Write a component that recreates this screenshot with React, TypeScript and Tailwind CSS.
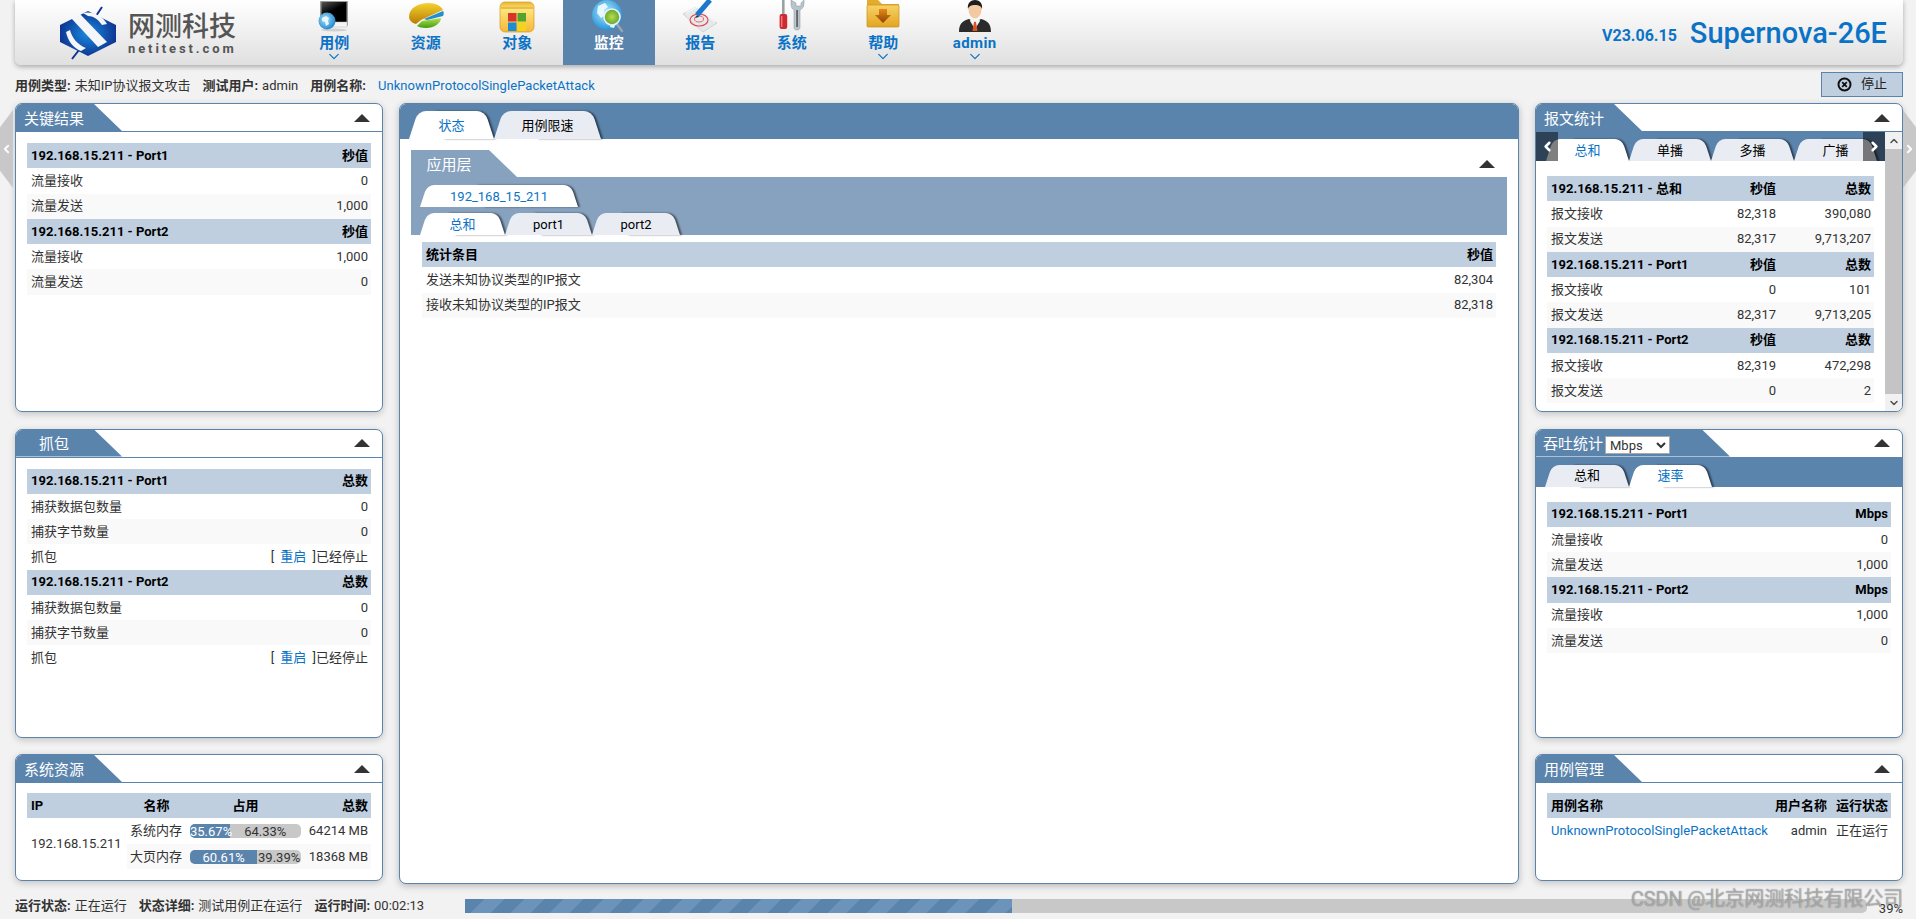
import type { ReactNode } from "react";
import { ChevronDown, ChevronLeft, ChevronRight, ChevronUp } from "lucide-react";

const navItems = [
  { label: "用例", icon: <CaseIcon />, menu: true },
  { label: "资源", icon: <ResourceIcon /> },
  { label: "对象", icon: <ObjectIcon /> },
  { label: "监控", icon: <MonitorIcon />, active: true },
  { label: "报告", icon: <ReportIcon /> },
  { label: "系统", icon: <SystemIcon /> },
  { label: "帮助", icon: <HelpIcon />, menu: true },
  { label: "admin", icon: <AdminIcon />, menu: true },
];

function CaseIcon() {
  return (
    <svg width="40" height="34" viewBox="0 0 40 34">
      <defs>
        <linearGradient id="screen" x1="0" y1="0" x2="0.6" y2="1">
          <stop offset="0" stopColor="#555" />
          <stop offset="0.5" stopColor="#000" />
        </linearGradient>
        <radialGradient id="globe1" cx="0.4" cy="0.4" r="0.7">
          <stop offset="0" stopColor="#a5e2fb" />
          <stop offset="1" stopColor="#0f7cc9" />
        </radialGradient>
      </defs>
      <rect x="6" y="1" width="28" height="25" rx="1" fill="#9a9a9a" />
      <rect x="7.5" y="2" width="25" height="21" fill="url(#screen)" />
      <rect x="18" y="22" width="15" height="5" fill="#f4f4f4" stroke="#bbb" strokeWidth="0.5" />
      <ellipse cx="20" cy="30" rx="13" ry="1.5" fill="#bbb" opacity="0.6" />
      <circle cx="13" cy="21" r="8.5" fill="url(#globe1)" />
      <path d="M8 18l4-2 3 2-1 3 1 3-3 2-1-4-3-1z" fill="#e8f6fd" />
    </svg>
  );
}

function ResourceIcon() {
  return (
    <svg width="40" height="34" viewBox="0 0 40 34">
      <defs>
        <linearGradient id="pieY" x1="0" y1="0" x2="0" y2="1">
          <stop offset="0" stopColor="#f5d22e" />
          <stop offset="1" stopColor="#b87d05" />
        </linearGradient>
        <linearGradient id="pieG" x1="0" y1="0" x2="0" y2="1">
          <stop offset="0" stopColor="#b7e24e" />
          <stop offset="1" stopColor="#3f9b12" />
        </linearGradient>
      </defs>
      <path d="M3 17C3 8 12 3 23 3c7 0 12 3 14 7L15 20l-5 4c-4-1-7-4-7-7z" fill="url(#pieY)" />
      <path d="M18 19l19-8c1 1 1 3 0 5L21 20z" fill="#1f8fd0" />
      <path d="M16 21l19-3c0 5-7 10-15 10-4 0-7-1-9-2z" fill="url(#pieG)" />
    </svg>
  );
}

function ObjectIcon() {
  return (
    <svg width="40" height="34" viewBox="0 0 40 34">
      <defs>
        <linearGradient id="fold1" x1="0" y1="0" x2="0" y2="1">
          <stop offset="0" stopColor="#e9b52f" />
          <stop offset="0.25" stopColor="#fde47a" />
          <stop offset="1" stopColor="#f4b73a" />
        </linearGradient>
      </defs>
      <rect x="3" y="2" width="34" height="30" rx="5" fill="url(#fold1)" stroke="#d99a1d" strokeWidth="0.7" />
      <path d="M4 8h32" stroke="#c98f18" strokeWidth="0.8" />
      <rect x="11" y="13" width="8.5" height="8.5" fill="#d8352a" />
      <rect x="20.5" y="13" width="8.5" height="8.5" fill="#4fa52e" />
      <rect x="11" y="22.5" width="8.5" height="8.5" fill="#1b8ed3" />
      <rect x="20.5" y="22.5" width="8.5" height="8.5" fill="#f4d31f" />
    </svg>
  );
}

function MonitorIcon() {
  return (
    <svg width="40" height="34" viewBox="0 0 40 34">
      <defs>
        <radialGradient id="globe2" cx="0.45" cy="0.4" r="0.7">
          <stop offset="0" stopColor="#b5ecff" />
          <stop offset="1" stopColor="#0c86d4" />
        </radialGradient>
        <radialGradient id="lens" cx="0.5" cy="0.5" r="0.6">
          <stop offset="0" stopColor="#b9dc4b" />
          <stop offset="1" stopColor="#4f9a2c" />
        </radialGradient>
      </defs>
      <circle cx="18" cy="15" r="15" fill="url(#globe2)" />
      <path d="M9 6l7-3 3 4-4 3 1 5-4 3-4-5zM22 22l5 1-2 5-4-1z" fill="#e6f7ff" />
      <path d="M27 23l6 8" stroke="#9aa6ad" strokeWidth="2.4" strokeLinecap="round" />
      <circle cx="23" cy="17" r="8" fill="url(#lens)" stroke="#e9f1f4" strokeWidth="1.6" />
    </svg>
  );
}

function ReportIcon() {
  return (
    <svg width="40" height="34" viewBox="0 0 40 34">
      <path d="M3 14L16 7l21 16-14 9z" fill="#e6e9ec" stroke="#c3c7cc" strokeWidth="0.7" />
      <path d="M6 13l11-6 18 15" fill="none" stroke="#f6f7f8" strokeWidth="1.4" />
      <ellipse cx="19" cy="20" rx="9" ry="6" fill="none" stroke="#e24a4a" strokeWidth="1.2" />
      <ellipse cx="19" cy="19" rx="4.5" ry="3" fill="none" stroke="#e86b6b" strokeWidth="1" />
      <path d="M17 15L30 0" stroke="#1a78cf" strokeWidth="5" />
      <path d="M17 15l-2 3 4-1z" fill="#203a57" />
    </svg>
  );
}

function SystemIcon() {
  return (
    <svg width="40" height="34" viewBox="0 0 40 34">
      <defs>
        <linearGradient id="metal" x1="0" y1="0" x2="1" y2="0">
          <stop offset="0" stopColor="#c5ced3" />
          <stop offset="0.5" stopColor="#3a3f42" />
          <stop offset="1" stopColor="#cfd5d8" />
        </linearGradient>
      </defs>
      <rect x="10" y="0" width="2.6" height="15" fill="#9aa1a5" />
      <rect x="7.6" y="14" width="7.6" height="15" rx="2" fill="#cf2a2f" />
      <rect x="9" y="16" width="1.4" height="11" fill="#ef7b7c" />
      <path d="M19 0l0 4c0 3 1 5 3 6v17c0 2 1 3 3 3s3-1 3-3V10c2-1 4-3 4-6V0l-3 3v3h-5V3z" fill="#b7c4cb" stroke="#8a969c" strokeWidth="0.5" />
      <rect x="23.5" y="10" width="3.2" height="17" fill="url(#metal)" />
    </svg>
  );
}

function HelpIcon() {
  return (
    <svg width="40" height="34" viewBox="0 0 40 34">
      <defs>
        <linearGradient id="fold2" x1="0" y1="0" x2="0" y2="1">
          <stop offset="0" stopColor="#f6d267" />
          <stop offset="1" stopColor="#e3a521" />
        </linearGradient>
        <linearGradient id="arrowDown" x1="0" y1="0" x2="0" y2="1">
          <stop offset="0" stopColor="#e68a16" />
          <stop offset="1" stopColor="#8f4206" />
        </linearGradient>
      </defs>
      <path d="M4 0h11l4 4h17v4H4z" fill="#e5ac2c" />
      <rect x="4" y="5" width="32" height="22" rx="1" fill="url(#fold2)" stroke="#c98f18" strokeWidth="0.7" />
      <path d="M16 9h8v6h4l-8 8-8-8h4z" fill="url(#arrowDown)" />
    </svg>
  );
}

function AdminIcon() {
  return (
    <svg width="40" height="34" viewBox="0 0 40 34">
      <path d="M4 32c0-8 3-11 10-13l6 3 6-3c7 2 10 5 10 13z" fill="#2b2b2b" />
      <path d="M16 18l4 4 4-4 1 3-5 8-5-8z" fill="#f4f4f4" />
      <path d="M19 22h2l1.5 9h-5z" fill="#d9541f" />
      <ellipse cx="20" cy="9.5" rx="6.5" ry="9" fill="#f3c9a2" />
      <path d="M13 9c-1-6 3-9 7-9s8 3 7 9c-1-3-3-4-7-4s-6 1-7 4z" fill="#1e1e1e" />
    </svg>
  );
}

function LogoMark() {
  return (
    <svg width="60" height="56" viewBox="0 0 60 56">
      <defs>
        <radialGradient id="logoBlue" cx="0.5" cy="0.5" r="0.55">
          <stop offset="0" stopColor="#1b8be0" />
          <stop offset="1" stopColor="#0d2f8c" />
        </radialGradient>
      </defs>
      <path d="M44 2l-6 9M14 54l7-9" stroke="#12348f" strokeWidth="2" />
      <path d="M30 6l28 14v17L30 51 2 37V20z" fill="url(#logoBlue)" />
      <path d="M13 13l9-4 27 28-9 5z" fill="#f4f6fa" />
      <path d="M25 8c9-2 19 2 24 11l-5 1c-4-6-9-9-14-9z" fill="#f4f6fa" />
      <path d="M8 27l4-2c2 8 8 15 16 18l-5 3C15 43 10 36 8 27z" fill="#f4f6fa" />
    </svg>
  );
}

function StopIcon() {
  return (
    <svg width="15" height="15" viewBox="0 0 15 15">
      <circle cx="7.5" cy="7.5" r="6" fill="none" stroke="#111" strokeWidth="2" />
      <path d="M5.2 5.2l4.6 4.6M9.8 5.2l-4.6 4.6" stroke="#111" strokeWidth="1.8" />
    </svg>
  );
}

function Collapse() {
  return <div className="mr-[12px] h-0 w-0 border-x-[8px] border-b-[8px] border-x-transparent border-b-[#333]" />;
}

function Tab({ label, active, width }: { label: string; active?: boolean; width: string }) {
  return (
    <div
      className={`relative isolate flex h-[22px] items-center justify-center text-[13px] ${width} ${active ? "text-[#0b73c6]" : "text-black"} ${
        active
          ? "before:bg-white after:bg-white"
          : "before:bg-[#e9edf3] after:bg-[#e9edf3]"
      } before:absolute before:inset-y-0 before:left-0 before:z-[1] before:w-[60%] before:origin-bottom before:skew-x-[-18deg] before:rounded-tl-[7px] after:absolute after:inset-y-0 after:right-0 after:w-[60%] after:origin-bottom after:skew-x-[18deg] after:rounded-tr-[7px] after:shadow-[2px_0_2px_rgba(0,0,0,0.55)]`}
    >
      <span className="relative z-[2] pt-[1px]">{label}</span>
    </div>
  );
}

function BigTab({ label, active, width }: { label: string; active?: boolean; width: string }) {
  return (
    <div
      className={`relative isolate flex h-[28px] items-center justify-center text-[13px] ${width} ${active ? "text-[#0b73c6]" : "text-black"} ${
        active
          ? "before:bg-white after:bg-white"
          : "before:bg-[#e9edf3] after:bg-[#e9edf3]"
      } before:absolute before:inset-y-0 before:left-0 before:z-[1] before:w-[60%] before:origin-bottom before:skew-x-[-18deg] before:rounded-tl-[8px] after:absolute after:inset-y-0 after:right-0 after:w-[60%] after:origin-bottom after:skew-x-[18deg] after:rounded-tr-[8px] after:shadow-[2px_0_2px_rgba(0,0,0,0.55)]`}
    >
      <span className="relative z-[2] pt-[1px]">{label}</span>
    </div>
  );
}

function Panel({
  title,
  titleExtra,
  titleClass = "w-[106px] pr-[30px] justify-center",
  className,
  children,
}: {
  title: string;
  titleExtra?: ReactNode;
  titleClass?: string;
  className: string;
  children: ReactNode;
}) {
  return (
    <div className={`flex flex-col overflow-hidden rounded-[7px] border border-[#5b84ad] bg-white shadow-[0_2px_7px_rgba(0,0,0,0.2)] ${className}`}>
      <div className="flex h-[28px] shrink-0 items-center justify-between border-b border-[#5b84ad]">
        <div className={`flex h-full items-center gap-[2px] bg-[#5b84ad] pt-[3px] text-[15px] text-white [clip-path:polygon(0_0,calc(100%-28px)_0,100%_100%,0_100%)] ${titleClass}`}>
          {title}
          {titleExtra}
        </div>
        <Collapse />
      </div>
      {children}
    </div>
  );
}

type Section = { head: string[]; rows: ReactNode[][] };

function DataTable({ sections, cols }: { sections: Section[]; cols: string }) {
  return (
    <div className="text-[13px]">
      {sections.map((section, i) => (
        <div key={i}>
          <div className={`grid h-[25.25px] items-center bg-[#bfcfe0] pl-[4px] pr-[3px] font-bold whitespace-nowrap text-black ${cols}`}>
            {section.head.map((cell, j) => (
              <div key={j} className={j === 0 ? "" : "text-right"}>
                {cell}
              </div>
            ))}
          </div>
          {section.rows.map((row, r) => (
            <div key={r} className={`grid h-[25.25px] items-center pl-[4px] pr-[3px] whitespace-nowrap text-[#333] ${cols} ${r % 2 === 1 ? "bg-[#f9f9f9]" : "bg-white"}`}>
              {row.map((cell, j) => (
                <div key={j} className={j === 0 ? "" : "text-right"}>
                  {cell}
                </div>
              ))}
            </div>
          ))}
        </div>
      ))}
    </div>
  );
}

const capture = (
  <>
    [ <span className="mx-[3px] text-[#0b73c6]">重启</span> ]已经停止
  </>
);

function UsageBar({ used, free }: { used: number; free: number }) {
  return (
    <div className="flex h-[14px] w-[111px] rounded-[5px] bg-[#c8c8c8] text-[13px]">
      <div className="rounded-l-[5px] bg-[#5b84ad] text-center leading-[15px] whitespace-nowrap text-white" style={{ width: `${used}%` }}>
        {used}%
      </div>
      <div className="z-[1] text-center leading-[15px] whitespace-nowrap text-[#333]" style={{ width: `${free}%` }}>
        {free}%
      </div>
    </div>
  );
}

export default function App() {
  return (
    <div className="relative flex h-[919px] w-[1916px] flex-col overflow-hidden bg-[#f2f2f2] font-['Roboto','Noto_Sans_CJK_SC',sans-serif] text-[13px] text-[#333]">
      {/* header */}
      <header className="ml-[15px] mr-[13px] flex h-[65px] shrink-0 rounded-b-[6px] bg-gradient-to-b from-white to-[#e0e0e0] shadow-[0_2px_5px_rgba(0,0,0,0.3)]">
        <div className="flex w-[273.5px] shrink-0 items-center gap-[10px] pl-[43px]">
          <LogoMark />
          <div className="flex flex-col pt-[2px]">
            <span className="text-[27px] leading-[29px] font-medium text-[#555]">网测科技</span>
            <span className="text-[13px] leading-[13px] font-bold tracking-[2.9px] text-[#555]">netitest.com</span>
          </div>
        </div>
        <nav className="flex">
          {navItems.map((item) => (
            <div key={item.label} className={`flex w-[91.5px] flex-col items-center ${item.active ? "bg-[#5b84ad] text-white" : "text-[#0b73c6]"}`}>
              <div className="h-[34px]">{item.icon}</div>
              <span className={`text-[15px] leading-[18px] font-bold ${item.label === "admin" ? "tracking-[0.4px]" : ""}`}>{item.label}</span>
              {item.menu && <ChevronDown size={20} strokeWidth={1.7} className="mt-[-4px]" />}
            </div>
          ))}
        </nav>
        <div className="ml-auto flex items-center pr-[16px] pt-[1px] text-[#0b73c6]">
          <span className="mr-[13px] pt-[5px] text-[16px] font-bold">V23.06.15</span>
          <span className="text-[29px] leading-[32px] font-medium">Supernova-26E</span>
        </div>
      </header>

      {/* case info */}
      <div className="flex h-[38px] shrink-0 items-center pl-[15px] pr-[13px]">
        <div className="flex items-center pt-[3px]">
          <b>用例类型:</b>
          <span className="ml-[4px]">未知IP协议报文攻击</span>
          <b className="ml-[12px]">测试用户:</b>
          <span className="ml-[4px]">admin</span>
          <b className="ml-[12px]">用例名称:</b>
          <span className="ml-[12px] tracking-[0.06px] text-[#0b73c6]">UnknownProtocolSinglePacketAttack</span>
        </div>
        <button className="ml-auto flex h-[25px] w-[82px] items-center justify-center gap-[9px] border border-[#5b84ad] bg-[#bfcfe0] text-[13px] text-[#222]">
          <StopIcon />
          停止
        </button>
      </div>

      {/* panels */}
      <main className="flex h-[781px] shrink-0 gap-[16px] pl-[15px] pr-[13px]">
        <div className="flex w-[368px] shrink-0 flex-col gap-[16.5px]">
          <Panel title="关键结果" className="h-[309px]">
            <div className="px-[11px] pt-[11px]">
              <DataTable
                cols="grid-cols-[1fr_auto]"
                sections={[
                  { head: ["192.168.15.211 - Port1", "秒值"], rows: [["流量接收", "0"], ["流量发送", "1,000"]] },
                  { head: ["192.168.15.211 - Port2", "秒值"], rows: [["流量接收", "1,000"], ["流量发送", "0"]] },
                ]}
              />
            </div>
          </Panel>
          <Panel title="抓包" className="h-[309px]">
            <div className="px-[11px] pt-[11px]">
              <DataTable
                cols="grid-cols-[1fr_auto]"
                sections={[
                  { head: ["192.168.15.211 - Port1", "总数"], rows: [["捕获数据包数量", "0"], ["捕获字节数量", "0"], ["抓包", capture]] },
                  { head: ["192.168.15.211 - Port2", "总数"], rows: [["捕获数据包数量", "0"], ["捕获字节数量", "0"], ["抓包", capture]] },
                ]}
              />
            </div>
          </Panel>
          <Panel title="系统资源" className="h-[127px]">
            <div className="px-[11px] pt-[10px]">
              <div className="grid h-[25px] grid-cols-[95px_61px_117px_1fr] items-center bg-[#bfcfe0] pl-[4px] pr-[3px] font-bold text-black">
                <div>IP</div>
                <div className="text-center">名称</div>
                <div className="text-center">占用</div>
                <div className="text-right">总数</div>
              </div>
              <div className="grid grid-cols-[100px_1fr]">
                <div className="flex items-center pl-[4px]">192.168.15.211</div>
                <div>
                  <div className="grid h-[26px] grid-cols-[61px_116px_1fr] items-center pr-[3px]">
                    <div className="pl-[3px]">系统内存</div>
                    <div className="pl-[2px]">
                      <UsageBar used={35.67} free={64.33} />
                    </div>
                    <div className="whitespace-nowrap text-right">64214 MB</div>
                  </div>
                  <div className="grid h-[25px] grid-cols-[61px_116px_1fr] items-center bg-[#f9f9f9] pr-[3px]">
                    <div className="pl-[3px]">大页内存</div>
                    <div className="pl-[2px]">
                      <UsageBar used={60.61} free={39.39} />
                    </div>
                    <div className="whitespace-nowrap text-right">18368 MB</div>
                  </div>
                </div>
              </div>
            </div>
          </Panel>
        </div>

        <div className="flex min-w-0 flex-1 flex-col overflow-hidden rounded-[7px] border border-[#5b84ad] bg-white shadow-[0_2px_7px_rgba(0,0,0,0.25)]">
          <div className="flex h-[35px] shrink-0 items-end bg-[#5b84ad] pl-[9px]">
            <BigTab label="状态" active width="w-[85px]" />
            <BigTab label="用例限速" width="w-[107px]" />
          </div>
          <div className="mx-[11px] mt-[11px]">
            <div className="flex h-[27px] items-center justify-between">
              <div className="flex h-full w-[106px] items-center justify-center bg-[#87a2bf] pr-[30px] pt-[3px] text-[15px] text-white [clip-path:polygon(0_0,calc(100%-28px)_0,100%_100%,0_100%)]">
                应用层
              </div>
              <Collapse />
            </div>
            <div className="flex h-[58px] flex-col gap-[6px] bg-[#87a2bf] pl-[9px] pt-[8px]">
              <div className="flex">
                <Tab label="192_168_15_211" active width="w-[158px]" />
              </div>
              <div className="flex">
                <Tab label="总和" active width="w-[85px]" />
                <Tab label="port1" width="w-[87px]" />
                <Tab label="port2" width="w-[88px]" />
              </div>
            </div>
            <div className="mx-[11px] mt-[7px]">
              <DataTable
                cols="grid-cols-[1fr_auto]"
                sections={[
                  {
                    head: ["统计条目", "秒值"],
                    rows: [
                      ["发送未知协议类型的IP报文", "82,304"],
                      ["接收未知协议类型的IP报文", "82,318"],
                    ],
                  },
                ]}
              />
            </div>
          </div>
        </div>

        <div className="flex w-[368px] shrink-0 flex-col gap-[16.5px]">
          <Panel title="报文统计" className="h-[309px]">
            <div className="flex min-h-0 flex-1">
              <div className="min-w-0 flex-1">
                <div className="relative flex h-[29px] items-end overflow-hidden bg-[#5b84ad] pl-[10px]">
                  <Tab label="总和" active width="w-[83px] shrink-0" />
                  <Tab label="单播" width="w-[82px] shrink-0" />
                  <Tab label="多播" width="w-[83px] shrink-0" />
                  <Tab label="广播" width="w-[83px] shrink-0" />
                  <div className="absolute inset-y-0 left-0 z-10 flex w-[22px] items-center justify-center bg-black/50 text-white">
                    <ChevronLeft size={15} strokeWidth={4} />
                  </div>
                  <div className="absolute inset-y-0 right-0 z-10 flex w-[22px] items-center justify-center bg-black/50 text-white">
                    <ChevronRight size={15} strokeWidth={4} />
                  </div>
                </div>
                <div className="px-[11px] pt-[15px]">
                  <DataTable
                    cols="grid-cols-[minmax(0,1fr)_95px_95px]"
                    sections={[
                      { head: ["192.168.15.211 - 总和", "秒值", "总数"], rows: [["报文接收", "82,318", "390,080"], ["报文发送", "82,317", "9,713,207"]] },
                      { head: ["192.168.15.211 - Port1", "秒值", "总数"], rows: [["报文接收", "0", "101"], ["报文发送", "82,317", "9,713,205"]] },
                      { head: ["192.168.15.211 - Port2", "秒值", "总数"], rows: [["报文接收", "82,319", "472,298"], ["报文发送", "0", "2"]] },
                    ]}
                  />
                </div>
              </div>
              <div className="flex w-[17px] shrink-0 flex-col items-center justify-between bg-[#c4c4c4]">
                <div className="flex h-[17px] w-full items-center justify-center bg-[#f1f1f1] text-[#505050]">
                  <ChevronUp size={12} strokeWidth={3} />
                </div>
                <div className="flex h-[17px] w-full items-center justify-center bg-[#f1f1f1] text-[#505050]">
                  <ChevronDown size={12} strokeWidth={3} />
                </div>
              </div>
            </div>
          </Panel>
          <Panel
            title="吞吐统计"
            titleClass="w-[194px] pl-[7px]"
            titleExtra={
              <select className="h-[18px] w-[65px] border border-[#aaa] bg-white text-[13px] text-[#333]" defaultValue="Mbps">
                <option>Mbps</option>
              </select>
            }
            className="h-[309px]"
          >
            <div className="flex h-[29px] items-end bg-[#5b84ad] pl-[9px]">
              <Tab label="总和" width="w-[84px]" />
              <Tab label="速率" active width="w-[83px]" />
            </div>
            <div className="px-[11px] pt-[15px]">
              <DataTable
                cols="grid-cols-[1fr_auto]"
                sections={[
                  { head: ["192.168.15.211 - Port1", "Mbps"], rows: [["流量接收", "0"], ["流量发送", "1,000"]] },
                  { head: ["192.168.15.211 - Port2", "Mbps"], rows: [["流量接收", "1,000"], ["流量发送", "0"]] },
                ]}
              />
            </div>
          </Panel>
          <Panel title="用例管理" className="h-[127px]">
            <div className="px-[11px] pt-[10px]">
              <DataTable
                cols="grid-cols-[minmax(0,1fr)_60px_61px]"
                sections={[
                  {
                    head: ["用例名称", "用户名称", "运行状态"],
                    rows: [[<span className="tracking-[0.06px] text-[#0b73c6]">UnknownProtocolSinglePacketAttack</span>, "admin", "正在运行"]],
                  },
                ]}
              />
            </div>
          </Panel>
        </div>
      </main>

      {/* status bar */}
      <footer className="flex flex-1 items-start pl-[15px] pr-[13px] pt-[15px]">
        <div className="flex w-[450px] shrink-0 items-center leading-[14px]">
          <b>运行状态:</b>
          <span className="ml-[4px]">正在运行</span>
          <b className="ml-[12px]">状态详细:</b>
          <span className="ml-[4px]">测试用例正在运行</span>
          <b className="ml-[12px]">运行时间:</b>
          <span className="ml-[4px]">00:02:13</span>
        </div>
        <div className="h-[14px] w-[1402px] shrink-0 rounded-r-[5px] bg-[#c8c8c8]">
          <div className="h-full w-[39%] bg-[repeating-linear-gradient(135deg,#5b84ad_0,#5b84ad_14px,#6c93ba_14px,#6c93ba_28px)]" />
        </div>
        <span className="ml-auto pt-[2px] leading-[15px]">39%</span>
      </footer>

      {/* side arrows */}
      <div className="absolute left-0 top-[110px] flex h-[78px] w-[13px] items-center bg-[#c8c8c8] text-white [clip-path:polygon(100%_0,100%_100%,0_78%,0_22%)]">
        <ChevronLeft size={14} strokeWidth={3.5} />
      </div>
      <div className="absolute right-0 top-[110px] flex h-[78px] w-[13px] items-center justify-end bg-[#c8c8c8] text-white [clip-path:polygon(0_0,100%_22%,100%_78%,0_100%)]">
        <ChevronRight size={14} strokeWidth={3.5} />
      </div>

      {/* watermark */}
      <div className="absolute bottom-[8px] right-[13px] text-[20px] leading-[24px] tracking-[-0.2px] text-white/50 [text-shadow:0_0_1px_#444]">
        CSDN @北京网测科技有限公司
      </div>
    </div>
  );
}
